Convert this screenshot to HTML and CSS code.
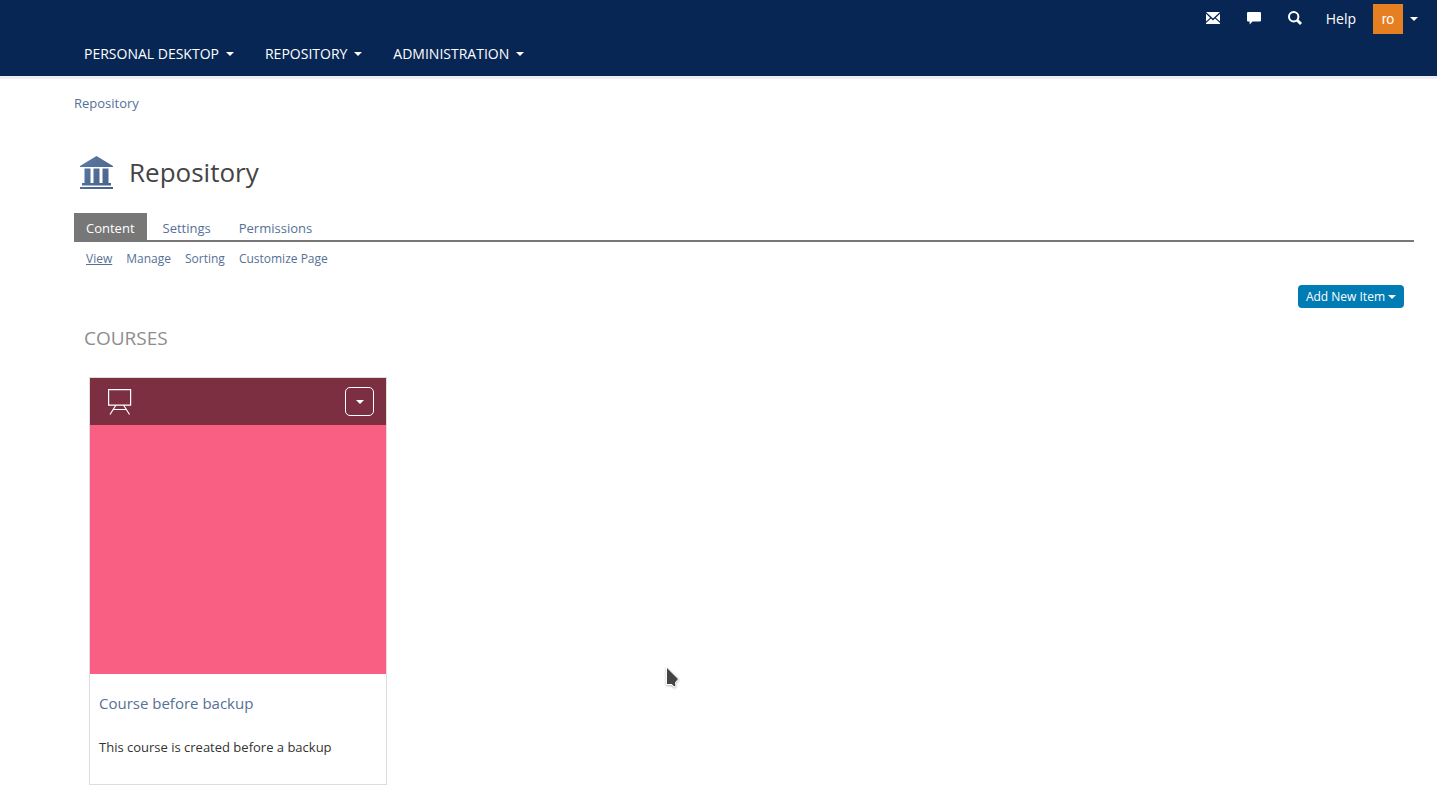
FILE: index.html
```html
<!DOCTYPE html>
<html lang="en">
<head>
<meta charset="utf-8">
<title>Repository</title>
<meta name="viewport" content="width=device-width, initial-scale=1">
<link rel="stylesheet" href="styles.css">
</head>
<body>
<header class="site-header">
  <div class="top-bar">
    <a class="top-link" href="#" aria-label="Mail">
      <svg class="glyph" viewBox="0 0 14 14" aria-hidden="true"><path fill="#fff" d="M0 1h14L7 7.500zM0 2.800 4.200 6.800 0 10.600zM14 2.800 9.800 6.800 14 10.600zM5 7.600 7 9.500 9 7.600 14 12v1H0v-1z"/></svg>
    </a>
    <a class="top-link" href="#" aria-label="Comments">
      <svg class="glyph" viewBox="0 0 14 14" aria-hidden="true"><path fill="#fff" d="M1 1h12a1 1 0 0 1 1 1v7.500a1 1 0 0 1-1 1H5.500L2.600 13.600V10.500H1a1 1 0 0 1-1-1V2a1 1 0 0 1 1-1z"/></svg>
    </a>
    <a class="top-link" href="#" aria-label="Search">
      <svg class="glyph" viewBox="0 0 14 14" aria-hidden="true"><circle cx="5.700" cy="5.700" r="4.700" fill="none" stroke="#fff" stroke-width="2"/><path d="M9 9 13 13" stroke="#fff" stroke-width="2.800"/></svg>
    </a>
    <a class="help-link" href="#">Help</a>
    <button class="user-menu" type="button" aria-label="User menu"><span class="avatar">ro</span><span class="caret"></span></button>
  </div>
  <nav class="main-nav">
    <button class="nav-item" type="button">Personal Desktop<span class="caret"></span></button>
    <button class="nav-item" type="button">Repository<span class="caret"></span></button>
    <button class="nav-item" type="button">Administration<span class="caret"></span></button>
  </nav>
</header>
<main class="page">
  <nav class="breadcrumb"><a href="#">Repository</a></nav>
  <div class="page-head">
    <svg class="page-icon" viewBox="0 0 33 34" aria-hidden="true">
      <defs><linearGradient id="blue" x1="0" y1="0" x2="1" y2="1"><stop offset="0" stop-color="#5d7ba5"/><stop offset="1" stop-color="#456088"/></linearGradient></defs>
      <path fill="url(#blue)" d="M16.500 0 33 10v1H0v-1zM4.500 12.500h6V27h3V12.500h6V27h3V12.500h6V27h2.500v2.500H2V27h2.500zM0 31h33v2H0z"/>
    </svg>
    <h1 class="page-title">Repository</h1>
  </div>
  <nav class="tabs">
    <a class="tab tab-active" href="#">Content</a>
    <a class="tab" href="#">Settings</a>
    <a class="tab" href="#">Permissions</a>
  </nav>
  <nav class="subtabs">
    <a class="subtab-active" href="#">View</a>
    <a href="#">Manage</a>
    <a href="#">Sorting</a>
    <a href="#">Customize Page</a>
  </nav>
  <div class="toolbar"><button class="add-button" type="button">Add New Item<span class="caret"></span></button></div>
  <section class="courses">
    <h2 class="section-title">Courses</h2>
    <div class="card-grid">
      <article class="card">
        <div class="card-head">
          <svg class="course-icon" viewBox="0 0 24 26" aria-hidden="true"><path fill="none" stroke="#fff" stroke-width="1.200" d="M.6.600h22v15.500H.6zM8 16 2 25.500M15.500 16 21.500 25.500M5.500 20.500h12.500"/></svg>
          <button class="card-menu" type="button" aria-label="Actions"><span class="caret"></span></button>
        </div>
        <div class="card-image"></div>
        <div class="card-body">
          <h3 class="card-title"><a href="#">Course before backup</a></h3>
          <p class="card-text">This course is created before a backup</p>
        </div>
      </article>
    </div>
  </section>
</main>
<svg class="pointer" viewBox="0 0 16 24" aria-hidden="true"><path fill="#444" stroke="#fff" stroke-width="1" d="M1.500 1v17.500H7L9 21l2-1-.5-3.500L13.500 13z"/></svg>
</body>
</html>
```
FILE: styles.css
```css
* { box-sizing: border-box; }
body {
  margin: 0;
  background: #fff;
  color: #333;
  font-family: "Open Sans", sans-serif;
  font-size: 13px;
  line-height: 18px;
}
a { color: #557196; text-decoration: none; }
button { font: inherit; color: inherit; border: 0; background: none; padding: 0; cursor: pointer; }
h1, h2, h3, p { margin: 0; font-weight: 400; }
.caret {
  display: inline-block;
  border: 4px solid transparent;
  border-top-color: currentColor;
  border-bottom: 0;
}
.site-header { background: #072654; color: #fff; border-bottom: 3px solid #eee; font-size: 14px; }
.top-bar { display: flex; justify-content: flex-end; align-items: center; height: 38px; padding-right: 19px; }
.top-link { display: flex; margin-right: 27px; padding-bottom: 2px; }
.glyph { width: 14px; height: 14px; }
.help-link { color: #fff; margin-left: -3px; margin-right: 17px; }
.user-menu { display: flex; align-items: center; gap: 7px; }
.avatar {
  width: 30px;
  background: #e67e22;
  font-family: Roboto, sans-serif;
  line-height: 30px;
  text-align: center;
}
.main-nav { display: flex; gap: 31px; height: 38px; padding: 6px 84px 0; align-items: flex-start; }
.nav-item { display: flex; align-items: center; gap: 7px; line-height: 20px; text-transform: uppercase; }
.page { padding: 15px 23px 25px 74px; }
.page-head { display: flex; align-items: flex-start; gap: 16px; margin-top: 44px; padding-left: 6px; height: 43px; }
.page-icon { width: 33px; height: 34px; margin-top: 0; }
.page-title { font-size: 26px; line-height: 32px; color: #444; }
.tabs { display: flex; gap: 4px; margin-top: 14px; border-bottom: 2px solid #777; }
.tab { padding: 6px 12px 3px; }
.tab-active { background: #777; color: #fff; }
.subtabs { display: flex; gap: 14px; padding: 8px 12px; font-size: 12px; }
.subtab-active { text-decoration: underline; }
.toolbar { display: flex; justify-content: flex-end; margin-top: 9px; padding-right: 10px; }
.add-button {
  display: flex;
  align-items: center;
  gap: 3px;
  padding: 0 8px;
  border-radius: 4px;
  background: #007cb4;
  color: #fff;
  font-size: 12px;
  line-height: 23px;
}
.section-title { margin: 17px 10px 0; font-size: 19px; line-height: 26px; color: #8d8d8d; text-transform: uppercase; }
.card-grid { display: grid; grid-template-columns: repeat(auto-fill, 298px); gap: 20px; margin: 26px 15px 0; }
.card { border: 1px solid #ddd; }
.card-head { display: flex; align-items: center; justify-content: space-between; height: 47px; padding: 0 12px 0 18px; background: #7b2f41; color: #fff; }
.course-icon { width: 24px; height: 26px; }
.card-menu { display: grid; place-items: center; width: 29px; height: 29px; border: 1px solid #fff; border-radius: 5px; }
.card-image { aspect-ratio: 296 / 249; background: #f95f82; }
.card-body { padding: 18px 9px 28px; }
.card-title { font-size: 15px; line-height: 22px; }
.card-text { margin-top: 24px; }
.pointer { position: absolute; left: 665px; top: 666px; width: 16px; height: 24px; filter: drop-shadow(0 1px 1px #bbb); }
```
